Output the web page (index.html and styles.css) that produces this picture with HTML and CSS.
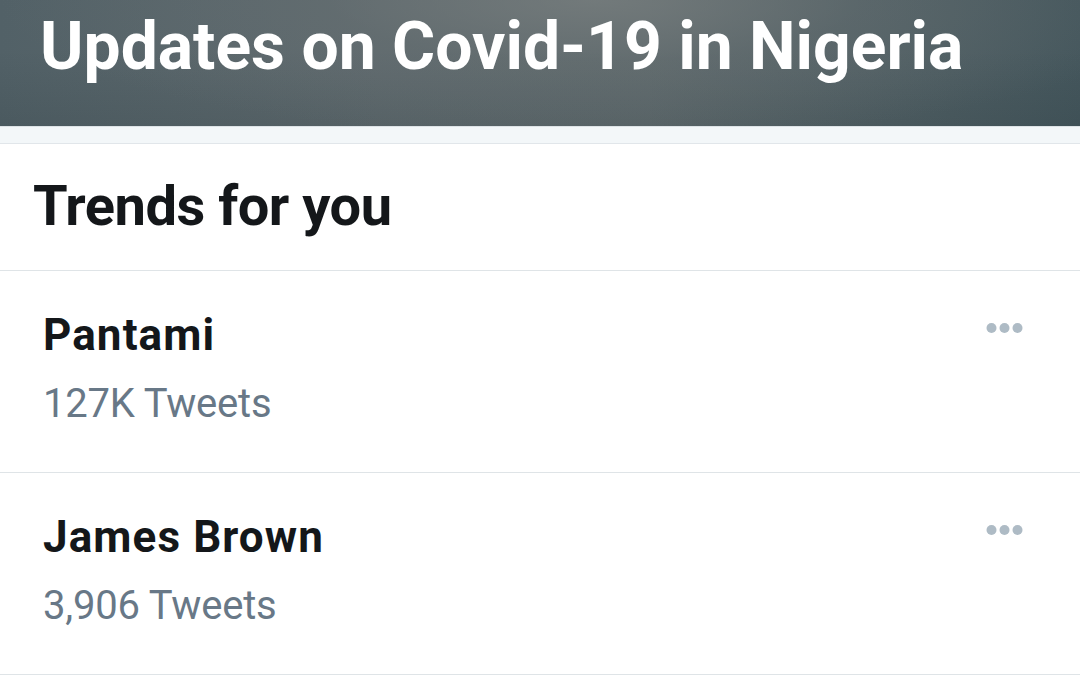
FILE: index.html
```html
<!DOCTYPE html>
<html>
<head>
<meta charset="utf-8">
<link rel="stylesheet" href="styles.css">
</head>
<body>
<header class="hero">
  <h1 class="hero-title">Updates on Covid-19 in Nigeria</h1>
</header>
<div class="band"></div>
<section class="trends">
  <h2 class="trends-title">Trends for you</h2>
  <div class="trend">
    <div class="trend-text">
      <div class="trend-name">Pantami</div>
      <div class="trend-count">127K Tweets</div>
    </div>
    <svg class="more" width="38" height="12" viewBox="0 0 38 12"><circle cx="5.5" cy="6" r="5"/><circle cx="18.5" cy="6" r="5"/><circle cx="31.5" cy="6" r="5"/></svg>
  </div>
  <div class="trend">
    <div class="trend-text">
      <div class="trend-name">James Brown</div>
      <div class="trend-count">3,906 Tweets</div>
    </div>
    <svg class="more" width="38" height="12" viewBox="0 0 38 12"><circle cx="5.5" cy="6" r="5"/><circle cx="18.5" cy="6" r="5"/><circle cx="31.5" cy="6" r="5"/></svg>
  </div>
</section>
</body>
</html>
```
FILE: styles.css
```css
html, body {
  margin: 0;
  padding: 0;
  background: #ffffff;
  font-family: Roboto, "Noto Sans", "Liberation Sans", sans-serif;
  overflow: hidden;
}
.hero {
  height: 126px;
  box-sizing: border-box;
  padding: 8px 0 0 40px;
  background:
    radial-gradient(ellipse 55% 110% at 55% 0%, rgba(122,128,128,0.7) 0%, rgba(105,113,115,0.35) 45%, rgba(80,95,100,0) 100%),
    linear-gradient(180deg, rgba(0,0,0,0) 40%, rgba(20,35,40,0.12) 100%),
    linear-gradient(90deg, #526167 0%, #5f6a6e 35%, #606b6e 60%, #45575d 100%);
}
.hero-title {
  margin: 0;
  font-size: 66px;
  line-height: 78px;
  font-weight: 700;
  color: #ffffff;
  letter-spacing: 0;
}
.band {
  height: 16px;
  background: #f3f7f9;
  border-top: 1px solid #dde3e6;
  border-bottom: 1px solid #e1e6ea;
}
.trends-title {
  margin: 0;
  padding: 29px 0 31px 33px;
  font-size: 56px;
  line-height: 66px;
  font-weight: 700;
  color: #14171a;
  letter-spacing: -0.5px;
  border-bottom: 1px solid #dfe4e7;
}
.trend {
  display: flex;
  align-items: flex-start;
  justify-content: space-between;
  padding: 38px 56px 43px 43px;
  border-bottom: 1px solid #dfe4e7;
}
.trend-name {
  font-size: 44px;
  line-height: 52px;
  font-weight: 700;
  color: #14171a;
  letter-spacing: 1.1px;
}
.trend-count {
  margin-top: 18px;
  font-size: 40px;
  line-height: 50px;
  font-weight: 400;
  color: #687887;
  letter-spacing: -0.2px;
}
.more {
  margin-top: 13px;
  fill: #aebbc5;
}
```
